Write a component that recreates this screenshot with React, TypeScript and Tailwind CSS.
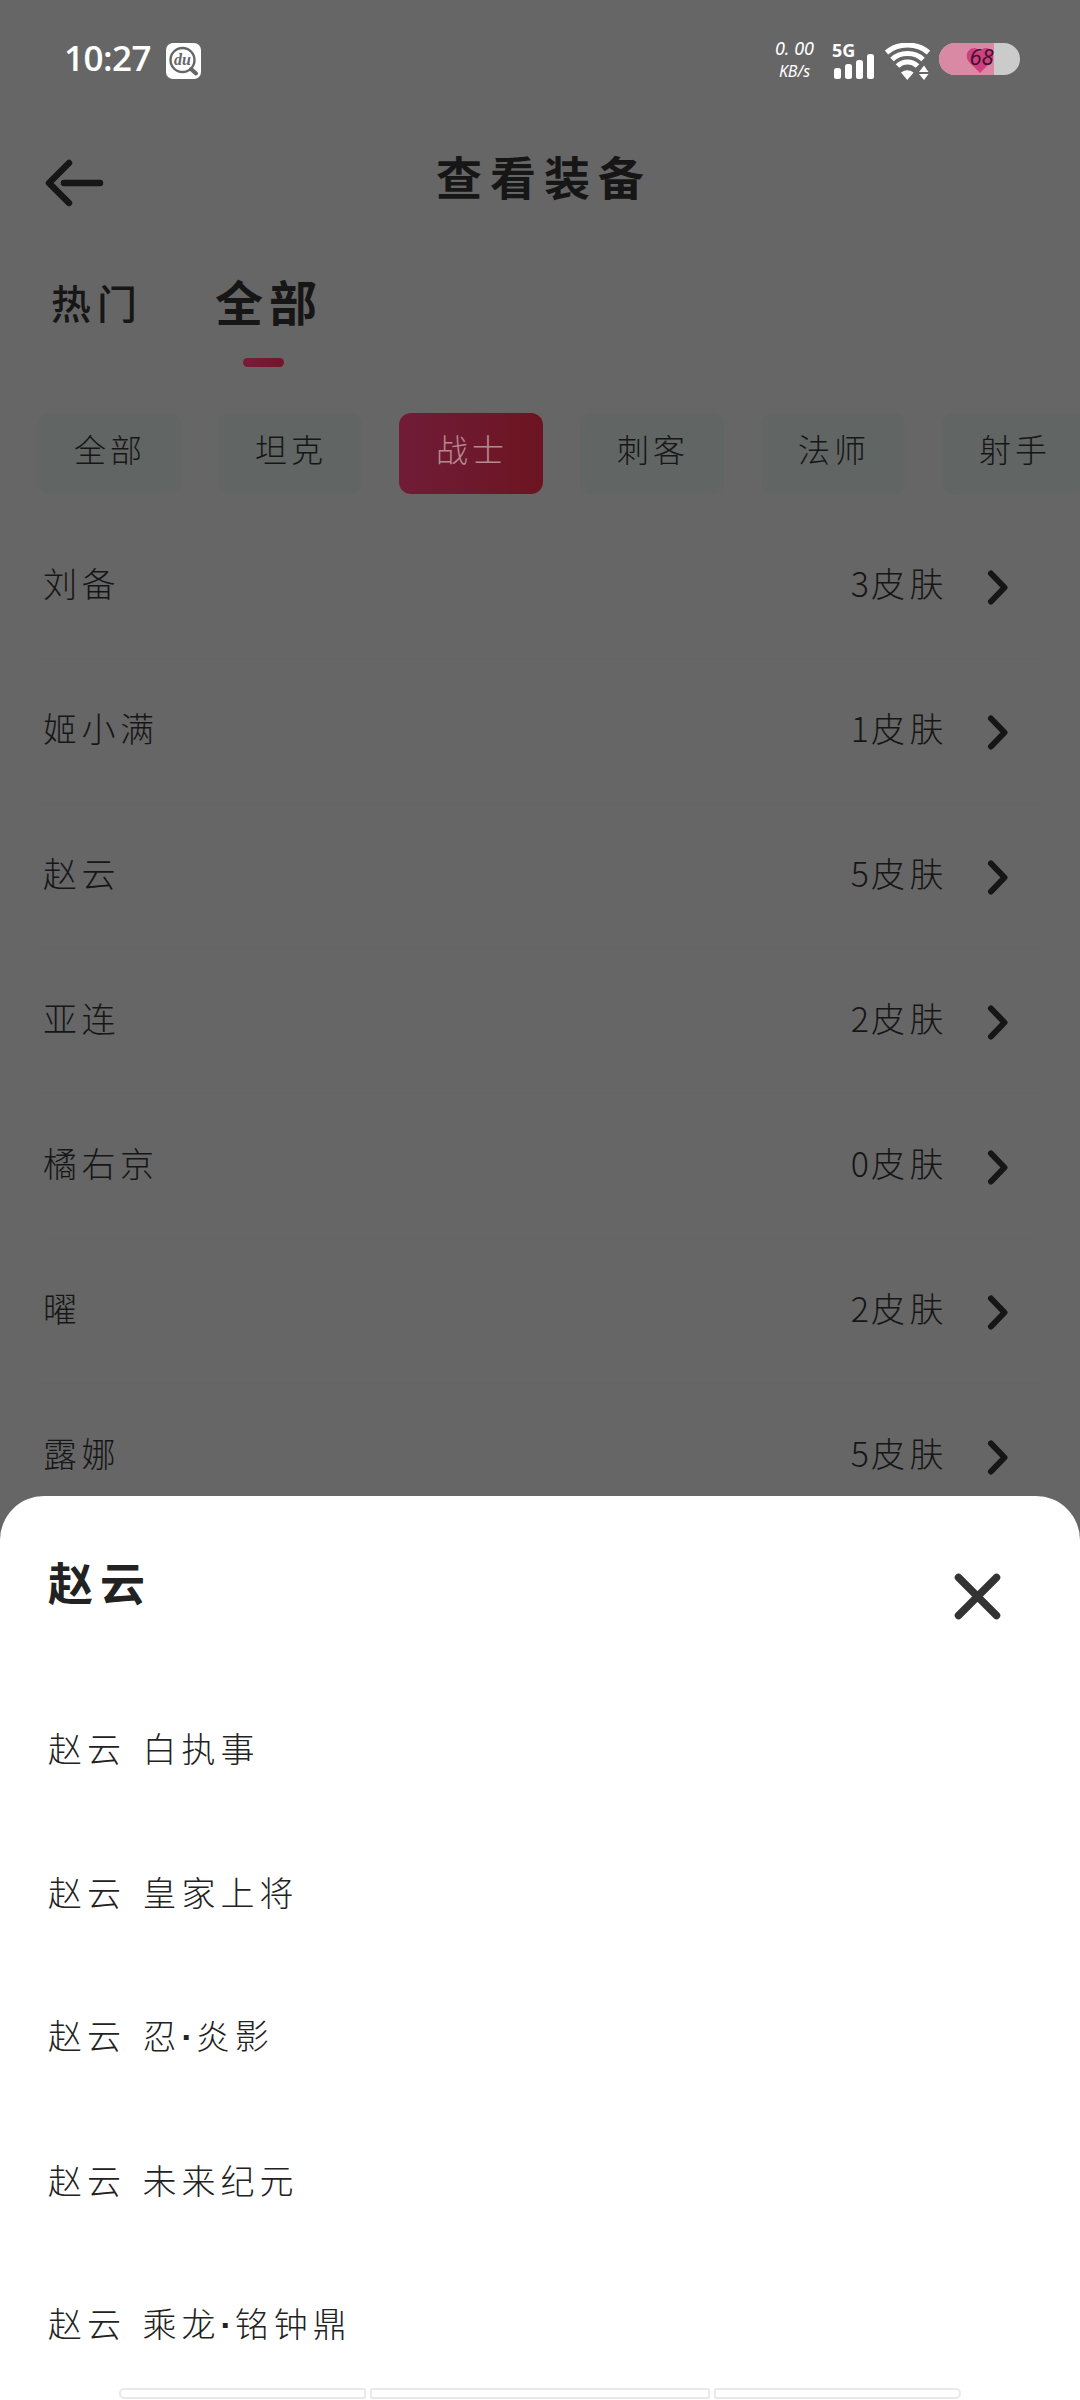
import React from 'react';

const chips = ['全部', '坦克', '战士', '刺客', '法师', '射手'];

const heroes = [
  { name: '刘备', count: 3 },
  { name: '姬小满', count: 1 },
  { name: '赵云', count: 5 },
  { name: '亚连', count: 2 },
  { name: '橘右京', count: 0 },
  { name: '曜', count: 2 },
  { name: '露娜', count: 5 },
];

const skins = ['赵云 白执事', '赵云 皇家上将', '赵云 忍·炎影', '赵云 未来纪元', '赵云 乘龙·铭钟鼎'];

function SearchBadge() {
  return (
    <svg className="ml-[15px] h-9 w-9" viewBox="0 0 36 36">
      <rect width="35" height="36" rx="7" fill="#fff" />
      <circle cx="16.500" cy="17" r="12" fill="none" stroke="#666" strokeWidth="2.4" />
      <path d="M25 26l5 4.500" stroke="#666" strokeWidth="4" strokeLinecap="round" />
      <text x="16.500" y="21.500" textAnchor="middle" fontSize="16" fontStyle="italic" fontWeight="700" fill="#666" fontFamily="Liberation Serif, serif">
        du
      </text>
    </svg>
  );
}

function Signal() {
  return (
    <div className="ml-[18px] flex h-9 w-[44px] flex-col">
      <span className="h-[11px] font-['Open_Sans',sans-serif] text-[18px] leading-[14px] font-bold">5G</span>
      <svg className="h-[25px] w-[44px]" viewBox="0 0 44 25" fill="#fff">
        <rect x="2" y="14" width="7" height="11" rx="2.500" />
        <rect x="13" y="10" width="7" height="15" rx="2.500" />
        <rect x="24" y="6" width="7" height="19" rx="2.500" />
        <rect x="35" y="0" width="7" height="25" rx="2.500" />
      </svg>
    </div>
  );
}

function Wifi() {
  return (
    <svg className="ml-[9px] h-[37px] w-[45px]" viewBox="0 0 45 37" fill="none" stroke="#fff" strokeWidth="5">
      <path d="M1.500 9.500C13-.5 32-.5 43.500 9.500" />
      <path d="M7 16.500C15 8.500 30 8.500 38 16.500" />
      <path d="M12.500 23C18 17.500 27 17.500 32.500 23" />
      <path d="M16 29.500q6.300-4.500 12.600 0L22.300 37z" fill="#fff" stroke="none" />
      <path d="M34 29l5-6.500 4.500 6.500zM34 31h9.500L39 37z" fill="#fff" stroke="none" />
    </svg>
  );
}

function Battery() {
  return (
    <div className="relative ml-[9px] flex h-8 w-[81px] items-center justify-center rounded-full bg-[#cbcbcb]">
      <div className="absolute inset-y-0 left-0 w-[55px] rounded-l-full bg-[#d989a4]" />
      <svg className="absolute top-[4px] left-[27px] h-[26px] w-[28px]" viewBox="0 0 28 26">
        <path d="M14 26L3 15C-2 9 2 1 8 1c3 0 5 2 6 4 1-2 3-4 6-4 3 0 6 2 7 5v7z" fill="#cf4080" />
      </svg>
      <span className="relative -mt-[7px] ml-1 font-['Open_Sans',sans-serif] text-[22px] leading-none font-normal text-[#3a1328] italic">68</span>
    </div>
  );
}

function StatusBar() {
  return (
    <div className="flex h-[122px] items-start pt-[43px] pr-[60px] pl-[64px] text-white">
      <span className="w-[87px] font-['Open_Sans',sans-serif] text-[35px] leading-[30px] font-semibold tracking-[-0.5px]">10:27</span>
      <SearchBadge />
      <div className="-mt-[6px] ml-auto flex flex-col items-center font-['Noto_Sans',sans-serif] text-[16px] leading-[23px] italic">
        <span className="text-[18px]">0. 00</span>
        <span>KB/s</span>
      </div>
      <Signal />
      <Wifi />
      <Battery />
    </div>
  );
}

/** Skin title; the middle dot is set in a font with a narrow dot. */
function SkinName({ text }: { text: string }) {
  const [before, after] = text.split('·');
  return (
    <span className="whitespace-pre">
      {before}
      {after && <span className="font-['Liberation_Sans',sans-serif] font-bold tracking-[3px]">·</span>}
      {after}
    </span>
  );
}

export default function App() {
  return (
    <div className="flex h-[2400px] w-[1080px] flex-col overflow-hidden bg-[#666] font-['Noto_Sans_CJK_SC',sans-serif] text-[#161616]">
      <div className="h-[1496px] shrink-0">
        <StatusBar />

        <header className="flex h-[122px] items-center px-[44px]">
          <svg className="h-[48px] w-[61px]" viewBox="0 0 61 48" fill="none" stroke="#161616" strokeWidth="6.500" strokeLinecap="round" strokeLinejoin="round">
            <path d="M25 4L5 24l20 20M20 24h36" />
          </svg>
          <h1 className="flex-1 pr-[53px] pb-[16px] text-center text-[46px] leading-none font-bold tracking-[8px]">查看装备</h1>
        </header>

        <nav className="flex h-[169px] items-start pt-[32px] pl-[51px]">
          <span className="mt-[6px] text-[40px] leading-[40px] font-medium tracking-[6px]">热门</span>
          <div className="ml-[72px] flex flex-col items-center">
            <span className="text-[48px] leading-[48px] font-bold tracking-[6px]">全部</span>
            <span className="mt-[34px] -ml-[12px] h-[9px] w-[41px] rounded-full bg-linear-to-r from-[#7a1c38] to-[#73152a]" />
          </div>
        </nav>

        <div className="flex h-[101px] gap-[37px] overflow-hidden pl-[37px]">
          {chips.map((chip) => (
            <div
              key={chip}
              className={
                'flex h-[81px] w-[144px] shrink-0 justify-center rounded-xl pt-[18px] pl-[2px] text-[32px] leading-[34px] font-light tracking-[4px] ' +
                (chip === '战士' ? 'bg-linear-to-r from-[#701c38] to-[#6c1420] text-[#b5898f]' : 'bg-[#616564]')
              }
            >
              {chip}
            </div>
          ))}
        </div>

        <ul className="mx-[42px]">
          {heroes.map((hero) => (
            <li key={hero.name} className="flex h-[145px] items-center border-b border-[#646464] text-[34px] leading-[36px] font-light tracking-[4.500px]">
              <span className="mb-[7px] ml-px">{hero.name}</span>
              <span className="mb-[7px] ml-auto">
                <span className="tracking-[2px]">{hero.count}</span>皮肤
              </span>
              <svg className="mt-px mr-[27px] ml-[37px] h-[36px] w-[26px]" viewBox="0 0 26 36" fill="none" stroke="#161616" strokeWidth="6" strokeLinecap="round" strokeLinejoin="round">
                <path d="M6 4.500L19.500 18.500 6 32.500" />
              </svg>
            </li>
          ))}
        </ul>
      </div>

      <section className="relative flex grow flex-col rounded-t-[44px] bg-white text-[#222]">
        <div className="flex h-[180px] items-start justify-between pt-[63px] pr-[79px] pl-[48px]">
          <h2 className="text-[45px] leading-[46px] font-bold tracking-[7px]">赵云</h2>
          <svg className="mt-[14px] h-[47px] w-[47px]" viewBox="0 0 47 47" stroke="#333" strokeWidth="7.500" strokeLinecap="round">
            <path d="M4.500 4.500l38 38M42.500 4.500l-38 38" />
          </svg>
        </div>
        <ul className="pl-[48px]">
          {skins.map((skin) => (
            <li key={skin} className="flex h-[144px] items-center pb-px text-[34px] leading-[36px] font-light tracking-[5px] [word-spacing:4px]">
              <SkinName text={skin} />
            </li>
          ))}
        </ul>
        <div className="absolute top-[892px] left-[119px] flex h-[11px] w-[842px] gap-[4px]">
          <div className="w-[247px] rounded-l-[5px] rounded-r-[2px] border-2 border-[#e9e9e9]" />
          <div className="w-[340px] rounded-[2px] border-2 border-[#e9e9e9]" />
          <div className="w-[247px] rounded-l-[2px] rounded-r-[5px] border-2 border-[#e9e9e9]" />
        </div>
      </section>
    </div>
  );
}
